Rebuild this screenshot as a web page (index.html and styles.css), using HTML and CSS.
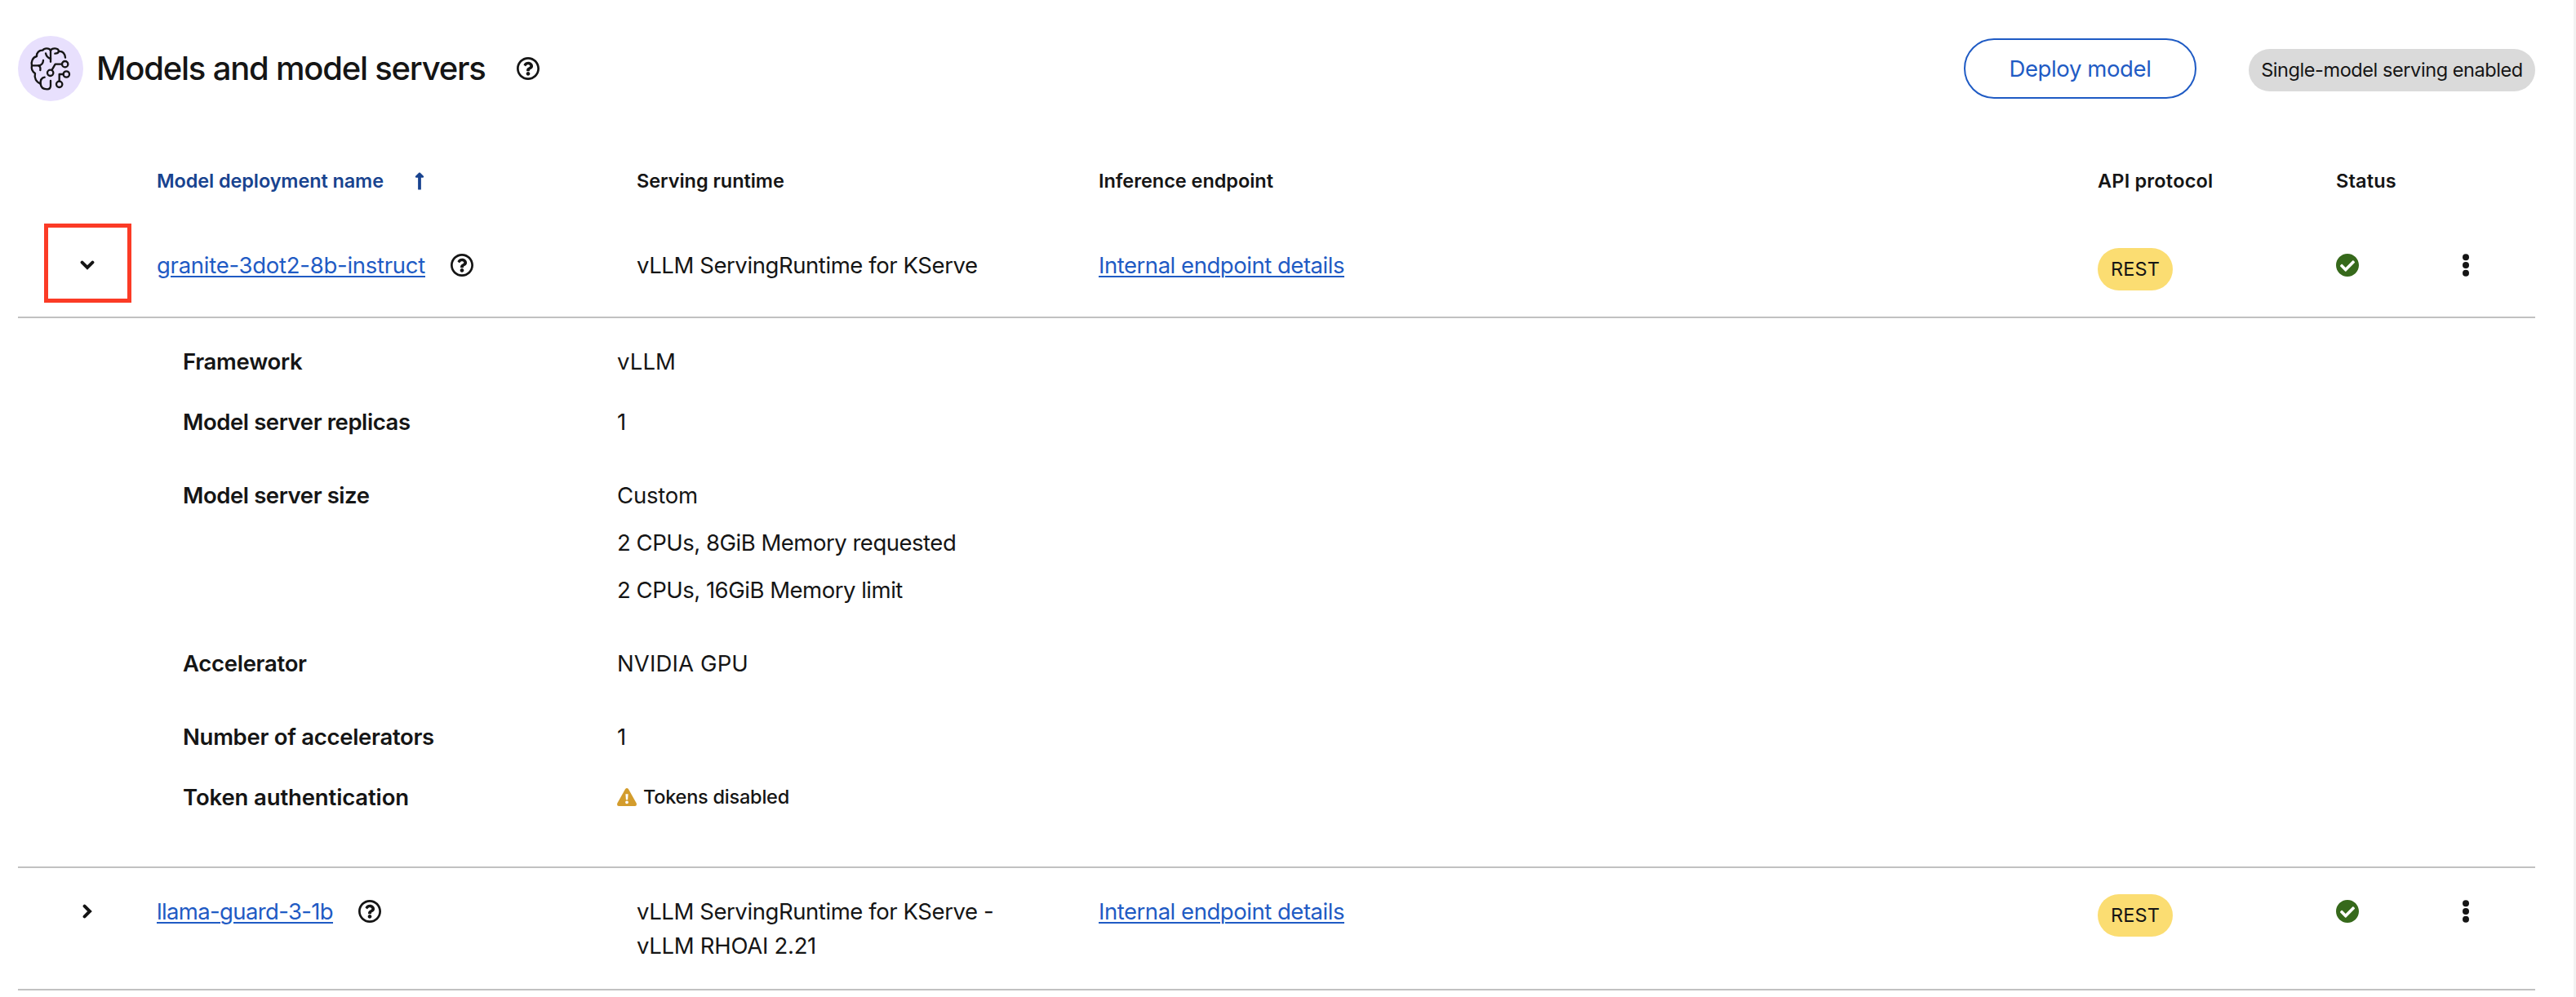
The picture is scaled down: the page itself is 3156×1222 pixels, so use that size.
FILE: index.html
```html
<!DOCTYPE html>
<html lang="en">
<head>
<meta charset="utf-8">
<title>Models and model servers</title>
<link rel="stylesheet" href="styles.css">
</head>
<body>
<svg width="0" height="0" class="sprite" aria-hidden="true">
  <symbol id="help" viewBox="8 8 496 496"><path d="M256 8C119.043 8 8 119.083 8 256c0 136.997 111.043 248 248 248s248-111.003 248-248C504 119.083 392.957 8 256 8zm0 448c-110.532 0-200-89.431-200-200 0-110.495 89.472-200 200-200 110.491 0 200 89.471 200 200 0 110.53-89.431 200-200 200zm107.244-255.2c0 67.052-72.421 68.084-72.421 92.863V300c0 6.627-5.373 12-12 12h-45.647c-6.627 0-12-5.373-12-12v-8.659c0-35.745 27.1-50.034 47.579-61.516 17.561-9.845 28.324-16.541 28.324-29.579 0-17.246-21.999-28.693-39.784-28.693-23.189 0-33.894 10.977-48.942 29.969-4.057 5.12-11.46 6.071-16.666 2.124l-27.824-21.098c-5.107-3.872-6.251-11.066-2.644-16.363C184.846 131.491 214.94 112 261.794 112c49.071 0 101.45 38.304 101.45 88.8zM298 368c0 23.159-18.841 42-42 42s-42-18.841-42-42 18.841-42 42-42 42 18.841 42 42z"/></symbol>
  <symbol id="check" viewBox="8 8 496 496"><path d="M504 256c0 136.967-111.033 248-248 248S8 392.967 8 256 119.033 8 256 8s248 111.033 248 248zM227.314 387.314l184-184c6.248-6.248 6.248-16.379 0-22.627l-22.627-22.627c-6.248-6.249-16.379-6.249-22.628 0L216 308.118l-70.059-70.059c-6.248-6.248-16.379-6.248-22.628 0l-22.627 22.627c-6.248 6.248-6.248 16.379 0 22.627l104 104c6.249 6.249 16.379 6.249 22.628.001z"/></symbol>
  <symbol id="kebab" viewBox="0 0 8 28"><circle cx="4" cy="4.2" r="4"/><circle cx="4" cy="14" r="4"/><circle cx="4" cy="23.8" r="4"/></symbol>
  <symbol id="chevron" viewBox="0 0 18 12"><path d="M2.6 2.6L9 9L15.4 2.6" fill="none" stroke="currentColor" stroke-width="4" stroke-linecap="round"/></symbol>
</svg>
<main class="page">
  <header class="header">
    <svg class="brain" viewBox="36 42 240 240"><circle class="brain-bg" cx="156" cy="162" r="120"/><g class="brain-lines"><path d="M156 137V96C151 86 133 86 127 95C113 94 104 104 105 117C89 121 84 138 87 151C84 164 90 174 99 180C95 197 103 213 119 217C120 230 129 238 143 238C152 238 156 233 156 225V207"/><path d="M138 106Q141 122 156 126"/><path d="M87 151H112Q128 149 129 132"/><path d="M112 151Q120 155 118 168"/><path d="M119 220Q117 197 134 194"/><path d="M156 96C161 85 185 85 186 99Q184 107 172 107"/><path d="M186 99Q207 97 210 122"/><circle cx="209" cy="146" r="11"/><path d="M198 146H173L161 167"/><circle cx="155" cy="178" r="11"/><circle cx="214" cy="183" r="11"/><path d="M203 183H188V209"/><circle cx="188" cy="220" r="11"/></g></svg>
    <h1 class="title">Models and model servers</h1>
    <svg class="icon header-help"><use href="#help"/></svg>
    <button class="deploy">Deploy model</button>
    <span class="pill platform">Single-model serving enabled</span>
  </header>

  <section class="table">
    <div class="row head">
      <span></span>
      <span class="cell sorted">Model deployment name<svg class="sort" viewBox="0 0 256 512"><path d="M88 166.059V468c0 6.627 5.373 12 12 12h56c6.627 0 12-5.373 12-12V166.059h46.059c21.382 0 32.09-25.851 16.971-40.971l-86.059-86.059c-9.373-9.373-24.569-9.373-33.941 0l-86.059 86.059c-15.119 15.119-4.411 40.971 16.971 40.971H88z"/></svg></span>
      <span>Serving runtime</span>
      <span>Inference endpoint</span>
      <span class="short">API protocol</span>
      <span class="short">Status</span>
    </div>
    <div class="row model">
      <span class="toggle marked"><svg class="chev"><use href="#chevron"/></svg></span>
      <span class="cell"><a class="link name">granite-3dot2-8b-instruct</a><svg class="icon"><use href="#help"/></svg></span>
      <span>vLLM ServingRuntime for KServe</span>
      <span><a class="link">Internal endpoint details</a></span>
      <span><span class="pill rest">REST</span></span>
      <span class="cell"><svg class="icon ok"><use href="#check"/></svg></span>
      <span class="cell"><svg class="kebab"><use href="#kebab"/></svg></span>
    </div>
    <dl class="details">
      <div class="detail"><dt>Framework</dt><dd class="caps">vLLM</dd></div>
      <div class="detail spaced"><dt class="server">Model server replicas</dt><dd>1</dd></div>
      <div class="detail spaced"><dt class="server">Model server size</dt><dd class="lines"><span class="custom">Custom</span><span>2 CPUs, 8GiB Memory requested</span><span>2 CPUs, 16GiB Memory limit</span></dd></div>
      <div class="detail spaced"><dt>Accelerator</dt><dd class="caps">NVIDIA GPU</dd></div>
      <div class="detail"><dt>Number of accelerators</dt><dd>1</dd></div>
      <div class="detail"><dt class="auth">Token authentication</dt><dd class="tokens"><svg class="warn" viewBox="0 0 24 22"><path class="warn-fill" d="M10.1 1.1Q12-1.1 13.9 1.1L23.7 18.6Q24.6 22 22 22H2Q-.6 22 .3 18.6Z"/><path class="warn-mark" d="M10.4 7.3H13.6L13.1 14.2H10.9ZM12 15.4A1.9 1.9 0 1 1 12 19.2A1.9 1.9 0 1 1 12 15.4Z"/></svg>Tokens disabled</dd></div>
    </dl>
    <div class="row model">
      <span class="toggle"><svg class="chev closed"><use href="#chevron"/></svg></span>
      <span class="cell"><a class="link name-guard">llama-guard-3-1b</a><svg class="icon"><use href="#help"/></svg></span>
      <span>vLLM ServingRuntime for KServe -<br><span class="version">vLLM RHOAI 2.21</span></span>
      <span><a class="link">Internal endpoint details</a></span>
      <span><span class="pill rest">REST</span></span>
      <span class="cell"><svg class="icon ok"><use href="#check"/></svg></span>
      <span class="cell"><svg class="kebab"><use href="#kebab"/></svg></span>
    </div>
  </section>
</main>
</body>
</html>
```
FILE: styles.css
```css
*, *::after { box-sizing: border-box; }
body { margin: 0; background: #fff; color: #151515; font: 400 27.5px/42px Inter, "Liberation Sans", sans-serif; letter-spacing: -.42px; }
.sprite { position: absolute; }
svg { display: block; flex: none; fill: currentColor; }
.page { height: 1222px; padding: 44px 47px 0 22px; border-right: 3px solid #f2f2f2; overflow: hidden; }
.header { display: flex; align-items: center; height: 80px; }
.brain { width: 80px; height: 80px; }
.brain-bg { fill: #e8e0fd; }
.brain-lines { fill: none; stroke: #151515; stroke-width: 7; stroke-linecap: round; stroke-linejoin: round; }
.title { margin: 0 0 0 16px; font-size: 40px; font-weight: 500; line-height: 52px; letter-spacing: -1.22px; white-space: nowrap; }
.icon { width: 28px; height: 28px; }
.header-help { margin-left: 38px; }
.deploy { width: 285px; height: 74px; margin-left: auto; padding: 0; border: 2px solid #1f5bc4; border-radius: 37px; background: #fff; color: #1f5bc4; font: inherit; letter-spacing: -.39px; }
.pill { display: flex; align-items: center; justify-content: center; height: 52px; border-radius: 26px; font-size: 23.5px; }
.platform { width: 351px; margin: 4px 0 0 64px; background: #dadada; }
.table { padding-top: 80px; }
.row { display: grid; grid-template-columns: 170px 588px 566px 1224px 292px 146px 1fr; }
.row > span { white-space: nowrap; }
.head { height: 68px; font-size: 23.5px; font-weight: 600; line-height: 35px; letter-spacing: -.04px; }
.head .short { letter-spacing: .2px; }
.cell { display: flex; align-items: center; gap: 31px; height: 42px; }
.sorted { height: 35px; gap: 38px; color: #18438f; letter-spacing: -.11px; }
.sort { width: 12px; height: 24px; }
.model { padding: 32px 0; border-bottom: 2px solid #c1c1c1; }
.toggle { position: relative; display: flex; align-items: center; justify-content: center; height: 42px; }
.marked::after { content: ""; position: absolute; left: 32px; top: -30px; width: 107px; height: 97px; border: 5px solid #fb3b26; }
.chev { width: 18px; height: 12px; }
.closed { transform: rotate(-90deg); }
.link { color: #1f5bc4; text-decoration: underline; text-decoration-thickness: 2px; text-underline-offset: 3px; letter-spacing: -.465px; }
.name { letter-spacing: -.266px; }
.name-guard { letter-spacing: -.64px; }
.version { letter-spacing: -.28px; }
.rest { width: 92px; background: #fbdd72; letter-spacing: .12px; }
.ok { color: #36691b; }
.kebab { width: 8px; height: 28px; margin-left: 9px; }
.details { display: flex; flex-direction: column; gap: 32px; margin: 0; padding: 32px 0 64px 202px; border-bottom: 2px solid #c1c1c1; }
.detail { display: grid; grid-template-columns: 532px 1fr; }
.spaced { margin-bottom: 16px; }
dt { font-weight: 600; letter-spacing: -.29px; }
.server { letter-spacing: -.42px; }
.auth { letter-spacing: -.13px; }
dd { margin: 0; }
.lines { display: flex; flex-direction: column; align-items: flex-start; gap: 16px; letter-spacing: -.485px; }
.custom { letter-spacing: -.2px; }
.caps { letter-spacing: .14px; }
.tokens { display: flex; align-items: center; gap: 8px; font-size: 23.5px; font-weight: 500; letter-spacing: -.23px; }
.warn { width: 24px; height: 22px; }
.warn-fill { fill: #d39c2c; }
.warn-mark { fill: #fff; }
```
